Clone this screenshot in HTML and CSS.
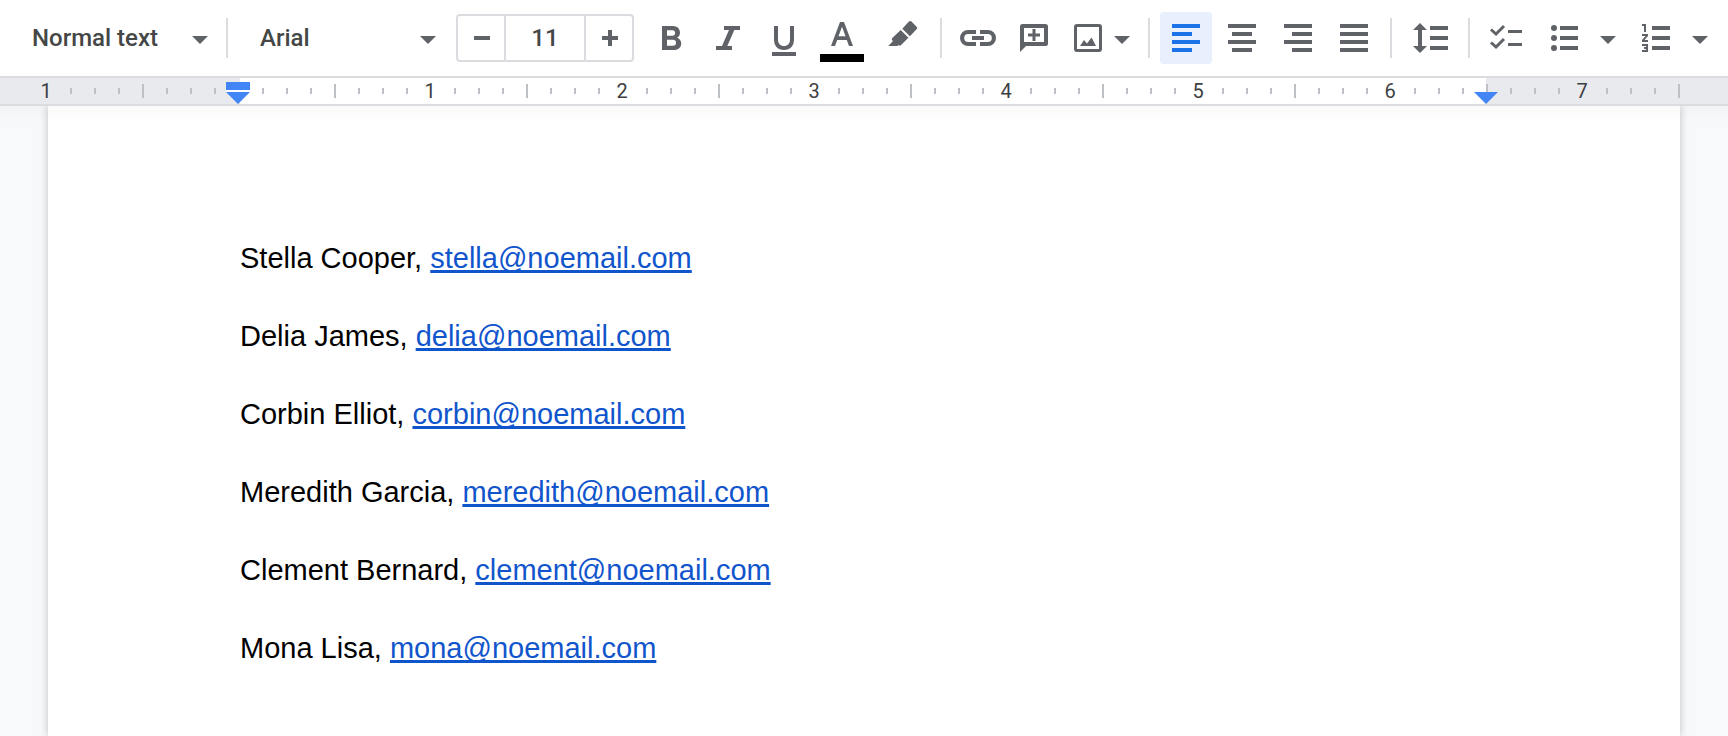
FILE: index.html
```html
<!DOCTYPE html>
<html lang="en">
<head>
<meta charset="utf-8">
<title>Document editor</title>
<link rel="stylesheet" href="styles.css">
</head>
<body>
<header class="toolbar" role="toolbar" aria-label="Formatting">
  <label class="picker picker-style">
    <select aria-label="Paragraph style"><option>Normal text</option><option>Title</option><option>Heading 1</option></select>
    <svg class="caret" width="16" height="8" viewBox="0 0 16 8"><path d="M0 0h16L8 8z"/></svg>
  </label>
  <span class="sep"></span>
  <label class="picker picker-font">
    <select aria-label="Font"><option>Arial</option><option>Roboto</option></select>
    <svg class="caret" width="16" height="8" viewBox="0 0 16 8"><path d="M0 0h16L8 8z"/></svg>
  </label>
  <div class="stepper">
    <button aria-label="Decrease font size"><svg width="16" height="16" viewBox="0 0 16 16"><path d="M0 6h16v4H0z"/></svg></button>
    <input type="text" value="11" aria-label="Font size">
    <button aria-label="Increase font size"><svg width="16" height="16" viewBox="0 0 16 16"><path d="M0 6h6V0h4v6h6v4h-6v6H6v-6H0z"/></svg></button>
  </div>
  <div class="group">
    <button class="tool" aria-label="Bold"><svg width="36" height="36" viewBox="0 0 36 36"><path fill-rule="evenodd" d="M8 6h11c4 0 7 2.800 7 6.600 0 2.400-1.100 4.200-2.800 5.200 2.500 1 4 3.100 4 5.700 0 3.900-3 6.500-7.200 6.500H8zM13 10.200v5.600h5.300a2.800 2.800 0 0 0 0-5.600zM13 19.800v6h6a3 3 0 0 0 0-6z"/></svg></button>
    <button class="tool" aria-label="Italic"><svg width="36" height="36" viewBox="0 0 36 36"><path d="M14 6h16v4h-5.700l-7 16H22v4H6v-4h6l7-16h-5z"/></svg></button>
    <button class="tool" aria-label="Underline"><svg width="36" height="36" viewBox="0 0 36 36"><path d="M6 32h24v4H6zM8 6h4v13.500c0 4 2.200 6.500 6 6.500s6-2.500 6-6.500V6h4v13.500C28 26 24 30 18 30S8 26 8 19.500z"/></svg></button>
  </div>
  <div class="group group-color">
    <button class="tool" aria-label="Text color"><svg width="44" height="44" viewBox="0 0 44 44"><path fill-rule="evenodd" d="M20 6h4l9 24h-4l-2.200-6h-9.600L15 30h-4zM22 10.700L18.500 20.300h7z"/><path class="swatch" d="M0 38h44v8H0z"/></svg></button>
    <button class="tool" aria-label="Highlight color"><svg width="36" height="36" viewBox="0 0 36 36"><path d="M24.900 1.600a1.800 1.800 0 0 1 2.600 0l5.100 5.100a1.800 1.800 0 0 1 0 2.600l-6.700 7-7.600-7.600zM16.700 10.100l7.700 7.700-7.300 7.300a1.800 1.800 0 0 1-2.500 0L13.500 26H4.300l4.700-4.900-.700-.700a1.800 1.800 0 0 1 0-2.500z"/></svg></button>
  </div>
  <span class="sep"></span>
  <div class="group">
    <button class="tool" aria-label="Insert link"><svg width="36" height="36" viewBox="0 0 36 36"><path d="M12 16h12v4H12zM8 10h8v4H8.200a4 4 0 0 0 0 8H16v4H8a8 8 0 0 1 0-16zM20 10h8a8 8 0 0 1 0 16h-8v-4h7.800a4 4 0 0 0 0-8H20z"/></svg></button>
    <button class="tool" aria-label="Add comment"><svg width="36" height="36" viewBox="0 0 36 36"><path fill-rule="evenodd" d="M6.500 4h23A2.500 2.500 0 0 1 32 6.500v17a2.500 2.500 0 0 1-2.500 2.500H10l-6 6V6.500A2.500 2.500 0 0 1 6.500 4zM8 8v14h20V8z"/><path d="M16.500 9h3v4.500H24v3h-4.500V21h-3v-4.500H12v-3h4.500z"/></svg></button>
    <button class="tool tool-menu" aria-label="Insert image"><svg width="28" height="28" viewBox="0 0 28 28"><path fill-rule="evenodd" d="M3 0h22a3 3 0 0 1 3 3v22a3 3 0 0 1-3 3H3a3 3 0 0 1-3-3V3a3 3 0 0 1 3-3zM3 3v22h22V3z"/><path d="M6 22l4-6 3 3.500 4.500-6L22 22z"/></svg><svg class="caret" width="16" height="8" viewBox="0 0 16 8"><path d="M0 0h16L8 8z"/></svg></button>
  </div>
  <span class="sep"></span>
  <div class="group">
    <button class="tool active" aria-label="Align left" aria-pressed="true"><svg width="28" height="28" viewBox="0 0 28 28"><path d="M0 0h28v4H0zM0 8h20v4H0zM0 16h28v4H0zM0 24h20v4H0z"/></svg></button>
    <button class="tool" aria-label="Align center"><svg width="28" height="28" viewBox="0 0 28 28"><path d="M0 0h28v4H0zM4 8h20v4H4zM0 16h28v4H0zM4 24h20v4H4z"/></svg></button>
    <button class="tool" aria-label="Align right"><svg width="28" height="28" viewBox="0 0 28 28"><path d="M0 0h28v4H0zM8 8h20v4H8zM0 16h28v4H0zM8 24h20v4H8z"/></svg></button>
    <button class="tool" aria-label="Justify"><svg width="28" height="28" viewBox="0 0 28 28"><path d="M0 0h28v4H0zM0 8h28v4H0zM0 16h28v4H0zM0 24h28v4H0z"/></svg></button>
  </div>
  <span class="sep"></span>
  <button class="tool tool-wide" aria-label="Line spacing"><svg width="36" height="36" viewBox="0 0 36 36"><path d="M8 3L15 10H10v16h5l-7 7L1 26h5V10H1zM18 6h18v4H18zM18 16h18v4H18zM18 26h18v4H18z"/></svg></button>
  <span class="sep"></span>
  <div class="group group-lists">
    <button class="tool" aria-label="Checklist"><svg width="36" height="36" viewBox="0 0 36 36"><path d="M20 10h14v3H20zM20 23h14v3H20z"/><path class="stroke" d="M3 9.500l5 4.500 8-8M3 22.500l5 4.500 8-8"/></svg></button>
    <button class="tool" aria-label="Bulleted list"><svg width="36" height="36" viewBox="0 0 36 36"><circle cx="8" cy="8" r="3"/><circle cx="8" cy="18" r="3"/><circle cx="8" cy="28" r="3"/><path d="M14 6h18v4H14zM14 16h18v4H14zM14 26h18v4H14z"/></svg></button>
    <button class="tool-caret" aria-label="Bulleted list options"><svg class="caret" width="16" height="8" viewBox="0 0 16 8"><path d="M0 0h16L8 8z"/></svg></button>
    <button class="tool" aria-label="Numbered list"><svg width="36" height="36" viewBox="0 0 36 36"><path d="M14 6h18v4H14zM14 16h18v4H14zM14 26h18v4H14zM4 4h4v8H6V6H4zM4 14h6v2l-3.500 4H10v2H4v-2l3.500-4H4zM4 24h6v8H4v-2h4v-1H6v-2h2v-1H4z"/></svg></button>
    <button class="tool-caret" aria-label="Numbered list options"><svg class="caret" width="16" height="8" viewBox="0 0 16 8"><path d="M0 0h16L8 8z"/></svg></button>
  </div>
</header>
<div class="ruler">
  <div class="inch"><b>1</b><i></i><i></i><i></i><i class="half"></i><i></i><i></i><i></i></div>
  <div class="inch"><b></b><i></i><i></i><i></i><i class="half"></i><i></i><i></i><i></i></div>
  <div class="inch"><b>1</b><i></i><i></i><i></i><i class="half"></i><i></i><i></i><i></i></div>
  <div class="inch"><b>2</b><i></i><i></i><i></i><i class="half"></i><i></i><i></i><i></i></div>
  <div class="inch"><b>3</b><i></i><i></i><i></i><i class="half"></i><i></i><i></i><i></i></div>
  <div class="inch"><b>4</b><i></i><i></i><i></i><i class="half"></i><i></i><i></i><i></i></div>
  <div class="inch"><b>5</b><i></i><i></i><i></i><i class="half"></i><i></i><i></i><i></i></div>
  <div class="inch"><b>6</b><i></i><i></i><i></i><i class="half"></i><i></i><i></i><i></i></div>
  <div class="inch"><b>7</b><i></i><i></i><i></i><i class="half"></i></div>
  <svg class="marker marker-left" width="24" height="22" viewBox="0 0 24 22"><path d="M0 0h24v8H0zM0 10h24L12 22z"/><path class="gap" d="M0 8h24v2H0z"/></svg>
  <svg class="marker marker-right" width="24" height="22" viewBox="0 0 24 22"><path d="M0 10h24L12 22z"/></svg>
</div>
<main class="canvas">
  <article class="page">
    <p>Stella Cooper, <a href="mailto:stella@noemail.com">stella@noemail.com</a></p>
    <p>Delia James, <a href="mailto:delia@noemail.com">delia@noemail.com</a></p>
    <p>Corbin Elliot, <a href="mailto:corbin@noemail.com">corbin@noemail.com</a></p>
    <p>Meredith Garcia, <a href="mailto:meredith@noemail.com">meredith@noemail.com</a></p>
    <p>Clement Bernard, <a href="mailto:clement@noemail.com">clement@noemail.com</a></p>
    <p>Mona Lisa, <a href="mailto:mona@noemail.com">mona@noemail.com</a></p>
  </article>
</main>
</body>
</html>
```
FILE: styles.css
```css
* { box-sizing: border-box; }
body {
  margin: 0;
  min-height: 100vh;
  display: flex;
  flex-direction: column;
  overflow-x: hidden;
  background: #fff;
  font-family: Roboto, "Liberation Sans", sans-serif;
}
button, select, input {
  margin: 0;
  padding: 0;
  border: 0;
  background: none;
  font: inherit;
  color: inherit;
}
svg { display: block; flex: none; fill: #5f6368; }

.toolbar {
  display: flex;
  align-items: center;
  padding: 12px 12px 12px 20px;
  border-bottom: 2px solid #dadce0;
  font-size: 24px;
  font-weight: 500;
  color: #444746;
}
.sep { flex: none; width: 2px; height: 40px; margin: 0 10px; background: #dadce0; }
.picker { display: grid; align-items: center; height: 52px; flex: none; }
.picker > * { grid-area: 1 / 1; }
.picker select { appearance: none; width: 100%; height: 52px; padding: 0 32px 0 12px; }
.picker .caret { justify-self: end; margin-right: 8px; pointer-events: none; }
.picker-style { width: 196px; }
.picker-font { width: 196px; margin-left: 10px; }
.caret { margin-top: 4px; }

.stepper {
  display: flex;
  flex: none;
  height: 48px;
  margin: 0 12px;
  border: 2px solid #dadce0;
  border-radius: 4px;
}
.stepper button { width: 46px; padding-left: 2px; display: grid; place-items: center; }
.stepper input {
  width: 82px;
  border: solid #dadce0;
  border-width: 0 2px;
  text-align: center;
}

.group { display: flex; align-items: center; gap: 4px; flex: none; }
.group-color { gap: 8px; margin: 0 2px 0 6px; }
.tool {
  flex: none;
  width: 52px;
  height: 52px;
  display: flex;
  align-items: center;
  justify-content: center;
  border-radius: 4px;
}
.tool svg { overflow: visible; }
.tool-menu { width: 74px; gap: 12px; padding-left: 2px; }
.tool-wide { width: 56px; }
.active { background: #e8f0fe; }
.active svg { fill: #1a73e8; }
.tool .swatch { fill: #000; }
.tool .stroke { fill: none; stroke: #5f6368; stroke-width: 3; }
.group-lists { gap: 6px; }
.tool-caret { width: 24px; height: 52px; display: grid; place-items: center; margin-right: 4px; }

.ruler {
  position: relative;
  display: flex;
  height: 28px;
  padding-left: 35px;
  border-bottom: 2px solid #dadce0;
  background: linear-gradient(to right, #e8eaed 240px, #fff 240px, #fff 1486px, #e8eaed 1486px);
}
.inch { display: flex; align-items: center; flex: none; }
.inch > * { width: 24px; display: flex; justify-content: center; }
.inch b { padding-right: 2px; font-size: 20px; line-height: 26px; font-weight: 400; color: #3c4043; }
.inch i::before { content: ""; width: 2px; height: 6px; background: #bdc1c6; }
.inch .half::before { height: 14px; }
.marker { position: absolute; top: 4px; fill: #4285f4; }
.marker-left { left: 226px; }
.marker-right { left: 1474px; }
.marker .gap { fill: #fff; }

.canvas {
  flex: 1;
  display: flex;
  padding: 0 48px;
  background: linear-gradient(#f3f4f5, #f8f9fa 16px);
}
.page {
  flex: 1;
  padding: 113px 192px 0;
  background: linear-gradient(#f9f9f9, #fff 16px);
  box-shadow: 0 0 8px rgba(60, 64, 67, 0.3);
  clip-path: inset(0 -12px);
  font: 29px/38px Arial, "Liberation Sans", sans-serif;
  color: #000;
}
.page p { margin: 0; padding: 20px 0; }
.page a {
  color: #1155cc;
  text-decoration: underline 3px;
  text-underline-offset: 2px;
  text-decoration-skip-ink: none;
}
```
